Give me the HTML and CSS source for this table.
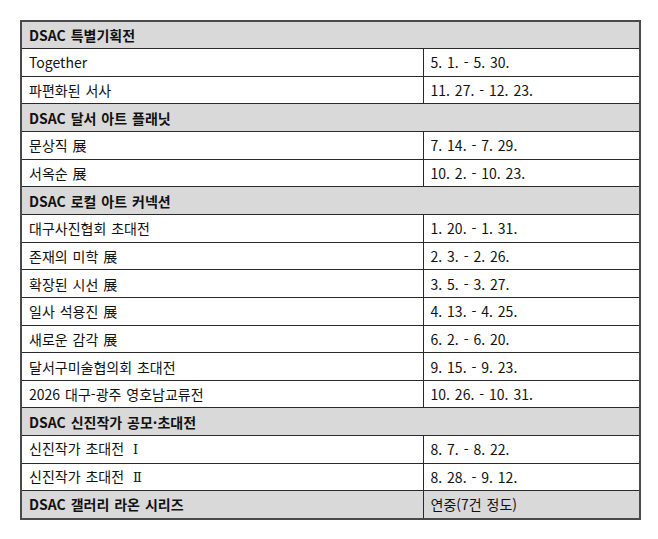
FILE: index.html
```html
<!DOCTYPE html>
<html lang="ko">
<head>
<meta charset="utf-8">
<link rel="stylesheet" href="styles.css">
</head>
<body>
<table class="sched">
  <colgroup><col class="c-name"><col class="c-date"></colgroup>
  <tr class="head"><td colspan="2">DSAC 특별기획전</td></tr>
  <tr><td>Together</td><td>5. 1. - 5. 30.</td></tr>
  <tr><td>파편화된 서사</td><td>11. 27. - 12. 23.</td></tr>
  <tr class="head"><td colspan="2">DSAC 달서 아트 플래닛</td></tr>
  <tr><td>문상직 展</td><td>7. 14. - 7. 29.</td></tr>
  <tr><td>서옥순 展</td><td>10. 2. - 10. 23.</td></tr>
  <tr class="head"><td colspan="2">DSAC 로컬 아트 커넥션</td></tr>
  <tr><td>대구사진협회 초대전</td><td>1. 20. - 1. 31.</td></tr>
  <tr><td>존재의 미학 展</td><td>2. 3. - 2. 26.</td></tr>
  <tr><td>확장된 시선 展</td><td>3. 5. - 3. 27.</td></tr>
  <tr><td>일사 석용진 展</td><td>4. 13. - 4. 25.</td></tr>
  <tr><td>새로운 감각 展</td><td>6. 2. - 6. 20.</td></tr>
  <tr><td>달서구미술협의회 초대전</td><td>9. 15. - 9. 23.</td></tr>
  <tr><td>2026 대구-광주 영호남교류전</td><td>10. 26. - 10. 31.</td></tr>
  <tr class="head"><td colspan="2">DSAC 신진작가 공모·초대전</td></tr>
  <tr><td>신진작가 초대전 <span class="roman">Ⅰ</span></td><td>8. 7. - 8. 22.</td></tr>
  <tr><td>신진작가 초대전 <span class="roman">Ⅱ</span></td><td>8. 28. - 9. 12.</td></tr>
  <tr class="head last"><td>DSAC 갤러리 라온 시리즈</td><td class="plain">연중(7건 정도)</td></tr>
</table>
</body>
</html>
```

FILE: styles.css
```css
html, body {
  margin: 0;
  padding: 0;
  background: #ffffff;
}
body {
  padding: 20px 0 0 20px;
  font-family: "Noto Sans CJK KR", "Noto Sans", sans-serif;
  font-size: 14px;
  color: #111111;
}
.sched {
  border-collapse: collapse;
  width: 619px;
  table-layout: fixed;
  border: 2px solid #4a4a4a;
}
.c-name { width: 402px; }
.c-date { width: 217px; }
.sched tr {
  height: 27.65px;
}
.sched td {
  border: 1px solid #2a2a2a;
  padding: 0 0 0 7px;
  line-height: 16px;
  vertical-align: middle;
  white-space: nowrap;
  word-spacing: 1px;
}
.head td {
  background: #d9d9d9;
  font-weight: bold;
}
.head td.plain {
  font-weight: normal;
}
.roman {
  font-family: "DejaVu Serif", serif;
  font-size: 13px;
  margin-left: 4px;
}
```
